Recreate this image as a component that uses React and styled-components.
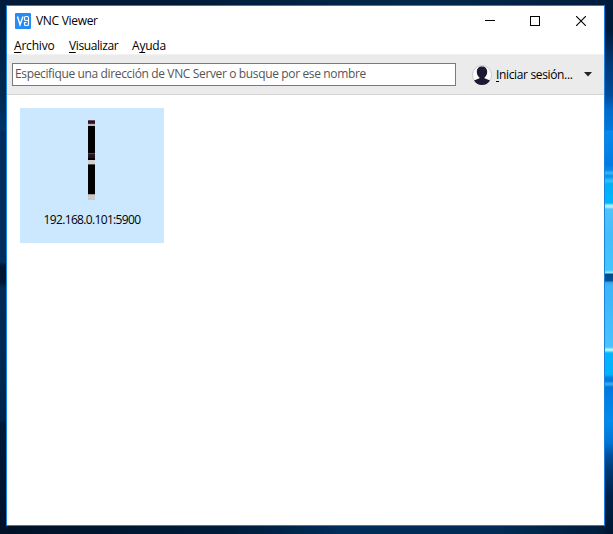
import React from 'react';
import styled, { createGlobalStyle } from 'styled-components';

const GlobalStyle = createGlobalStyle`
  * { box-sizing: border-box; }
  body { margin: 0; overflow: hidden; }
`;

const Desktop = styled.main`
  width: 613px;
  height: 534px;
  padding: 5px 8px 8px 6px;
  font-family: 'Open Sans', 'Noto Sans', sans-serif;
  font-size: 12px;
  line-height: 16px;
  color: #000;
  background:
    linear-gradient(#001c3b, #00284f 90px, #00356a 130px, #002d5b 132px, #002d5b 255px, #00305f 262px, #001630 266px, #001731 282px, #002b55 288px, #002a52 350px, #002448 420px, #001a38 424px, #001128 534px) 0 0 / 6px 100% no-repeat,
    linear-gradient(#001c3c, #001a38 30px, #003a78 64px, #004a98 94px, #006bcb 110px, #0078df 130px, #058aee 131px, #007be4 165px, #0789ed 170px, #37b8f8 173px, #058eed 176px, #32c4f7 181px, #00b0f7 184px, #00b7fb 203px, #9ce9ff 205px, #b9f1ff 207px, #50c3fb 209px, #45bdfb 235px, #42c6ff 270px, #9af1ff 273px, #00498b 274px, #00549a 281px, #3b9bdc 282px, #3bb4f9 285px, #4ac3ff 347px, #c8fff7 350px, #00b5ff 353px, #00b2fc 375px, #0084e6 377px, #0079dc 381px, #40aeeb 384px, #0079df 387px, #008bee 422px, #0074d4 443px, #00509f 455px, #003a73 470px, #002149 495px, #001630 534px) right 0 / 8px 100% no-repeat,
    linear-gradient(90deg, #001126, #001c3b 230px, #002d59 340px, #002c55 500px, #001b39) 0 100% / 100% 8px no-repeat,
    linear-gradient(90deg, #001b39, #001a38 170px, #00284d 420px, #001c3c);
`;

const Window = styled.section`
  width: 599px;
  height: 521px;
  display: flex;
  flex-direction: column;
  border: 1px solid #1984df;
  background: #fff;
`;

const TitleBar = styled.header`
  height: 30px;
  flex: none;
  display: flex;
  align-items: center;
  padding-left: 8px;
`;

const Text = styled.span`
  flex: none;
  white-space: pre;
  letter-spacing: ${(p) => p.$spacing || 0}px;
`;

const Title = styled(Text)`
  margin-left: 5px;
`;

const Controls = styled.div`
  display: flex;
  margin-left: auto;
`;

const ControlButton = styled.button`
  width: ${(p) => p.$width}px;
  height: 29px;
  padding: 0;
  border: 0;
  display: flex;
  align-items: center;
  justify-content: center;
  background: transparent;
`;

const Menu = styled.nav`
  height: 18px;
  flex: none;
  display: flex;
  align-items: center;
  padding: 1px 0 0 7px;
`;

const MenuItem = styled(Text)`
  width: ${(p) => p.$width}px;
`;

const Key = styled.span`
  text-decoration: underline;
  text-underline-offset: 2px;
  text-decoration-thickness: 1px;
  text-decoration-skip-ink: none;
`;

const Toolbar = styled.div`
  height: 41px;
  flex: none;
  display: flex;
  align-items: center;
  padding-left: 5px;
  border-top: 1px solid #f2f2f2;
  border-bottom: 1px solid #d5d5d5;
  background: #ebebeb;
`;

const Address = styled.div`
  width: 444px;
  height: 23px;
  display: flex;
  align-items: center;
  padding: 0 0 1px 2px;
  border: 1px solid #7a7a7a;
  background: #fff;
  color: #555;
`;

const SignIn = styled.div`
  display: flex;
  align-items: center;
  margin-left: 16px;
`;

const SignInLabel = styled(Text)`
  width: 92px;
  padding-left: 4px;
`;

const Content = styled.div`
  flex: 1;
  padding: 13px;
`;

const Connection = styled.article`
  width: 144px;
  height: 135px;
  padding-top: 12px;
  display: flex;
  flex-direction: column;
  align-items: center;
  gap: 12px;
  background: #cce8ff;
`;

const Preview = styled.div`
  width: 7px;
  height: 80px;
  margin-right: 1px;
  background: linear-gradient(
    #5b505c 0 1px, #2e1029 1px 3px, #46313f 3px 4px, #bab7b9 4px 6px,
    #000 6px 33px, #4b434d 33px 34px, #2d1328 34px 36px, #23101f 36px 38px,
    #000 38px 40px, #d0d0d0 40px 44px, #4f4f4f 44px 45px, #000 45px 74px,
    #989898 74px 75px, #cbc9c9 75px 80px
  );
`;

function Logo() {
  return (
    <svg width="16" height="16" viewBox="0 0 16 16" fill="none" stroke="#fff">
      <rect width="16" height="16" rx="1" fill="#258bf5" stroke="none" />
      <path d="M2.5 3.5L5 11.8L8 3.5" strokeWidth="1.4" />
      <path d="M13.5 7.5H10.8Q9.5 7.5 9.5 6.2V4.8Q9.5 3.5 10.8 3.5H12.2Q13.5 3.5 13.5 4.8V11.2Q13.5 12.5 12.2 12.5H10.8Q9.5 12.5 9.5 11.2V9.5H11.5" strokeWidth="1.2" />
    </svg>
  );
}

function Avatar() {
  return (
    <svg width="20" height="20" viewBox="0 0 20 20">
      <circle cx="10" cy="10" r="9.5" fill="#fff" stroke="#c9c9cd" />
      <path d="M10 1.5C6.8 1.5 4.8 3.5 4.8 6.8C4.8 9.5 6 11.5 7.5 12.5V13.3L2 15.5Q5 20 10 20Q15 20 18 15.5L12.5 13.3V12.5C14 11.5 15.2 9.5 15.2 6.8C15.2 3.5 13.2 1.5 10 1.5Z" fill="#1c1934" />
    </svg>
  );
}

export default function App() {
  return (
    <>
      <GlobalStyle />
      <Desktop>
        <Window>
          <TitleBar>
            <Logo />
            <Title $spacing={-0.3}>VNC Viewer</Title>
            <Controls>
              <ControlButton $width={45} aria-label="Minimizar">
                <svg width="10" height="10"><path d="M0 4.5H10" stroke="#000" /></svg>
              </ControlButton>
              <ControlButton $width={46} aria-label="Maximizar">
                <svg width="10" height="10"><rect x=".5" y=".5" width="9" height="9" fill="none" stroke="#000" /></svg>
              </ControlButton>
              <ControlButton $width={46} aria-label="Cerrar">
                <svg width="10" height="10"><path d="M0 0L10 10M10 0L0 10" stroke="#000" strokeWidth="1.1" /></svg>
              </ControlButton>
            </Controls>
          </TitleBar>
          <Menu>
            <MenuItem $width={55} $spacing={-0.2}><Key>A</Key>rchivo</MenuItem>
            <MenuItem $width={63} $spacing={-0.4}><Key>V</Key>isualizar</MenuItem>
            <MenuItem $width={40} $spacing={-0.2}>A<Key>y</Key>uda</MenuItem>
          </Menu>
          <Toolbar>
            <Address>
              <Text $spacing={-0.36}>Especifique una dirección de VNC Server o busque por ese nombre</Text>
            </Address>
            <SignIn>
              <Avatar />
              <SignInLabel $spacing={-0.35}><Key>I</Key>niciar sesión...</SignInLabel>
              <svg width="8" height="5"><path d="M0 0H8L4 4.5Z" fill="#222" /></svg>
            </SignIn>
          </Toolbar>
          <Content>
            <Connection>
              <Preview />
              <Text $spacing={-0.66}>192.168.0.101:5900</Text>
            </Connection>
          </Content>
        </Window>
      </Desktop>
    </>
  );
}
